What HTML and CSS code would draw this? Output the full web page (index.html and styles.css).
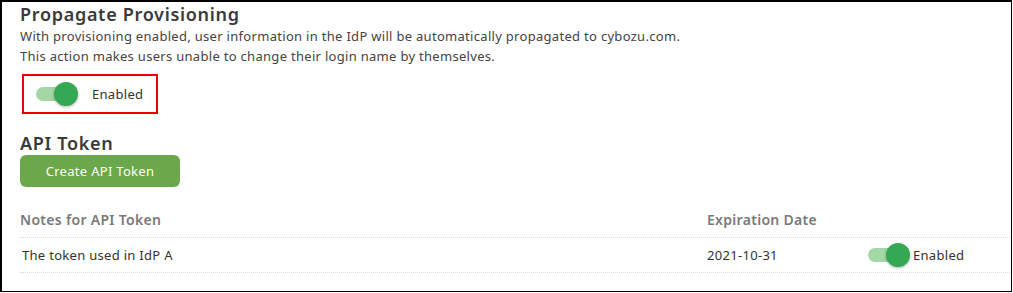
FILE: index.html
```html
<!DOCTYPE html>
<html>
<head>
<meta charset="utf-8">
<link rel="stylesheet" href="styles.css">
</head>
<body>
<div class="frame">
  <section class="section">
    <h2 class="title">Propagate Provisioning</h2>
    <p class="desc">With provisioning enabled, user information in the IdP will be automatically propagated to cybozu.com.<br>This action makes users unable to change their login name by themselves.</p>
    <div class="highlight">
      <span class="toggle"><span class="knob"></span></span>
      <span class="toggle-label">Enabled</span>
    </div>
  </section>
  <section class="section api">
    <h2 class="title">API Token</h2>
    <button class="btn">Create API Token</button>
    <div class="table">
      <div class="row head">
        <div class="c1">Notes for API Token</div>
        <div class="c2">Expiration Date</div>
        <div class="c3"></div>
      </div>
      <div class="row body">
        <div class="c1 note">The token used in IdP A</div>
        <div class="c2">2021-10-31</div>
        <div class="c3"><span class="toggle small"><span class="knob"></span></span><span class="toggle-label tight">Enabled</span></div>
      </div>
    </div>
  </section>
</div>
</body>
</html>
```

FILE: styles.css
```css
* { box-sizing: border-box; }
html, body { margin: 0; padding: 0; background: #fff; }
body { font-family: "Noto Sans", "Liberation Sans", sans-serif; color: #333; }
.frame {
  width: 1012px;
  height: 292px;
  border: 2px solid #000;
  border-right-width: 1px;
  border-bottom-width: 1px;
  padding: 0 0 0 18px;
  overflow: hidden;
}
.title {
  margin: 0;
  font-size: 18px;
  font-weight: 600;
  color: #3a3a3a;
  line-height: 24px;
  letter-spacing: 0.7px;
}
.desc {
  margin: 0;
  font-size: 13px;
  line-height: 20px;
  color: #444;
  letter-spacing: 0.3px;
}
.highlight {
  margin-top: 8px;
  margin-left: 2px;
  width: 136px;
  height: 40px;
  border: 2px solid #e00;
  display: flex;
  align-items: center;
  padding-left: 12px;
}
.toggle {
  position: relative;
  width: 40px;
  height: 14px;
  border-radius: 7px;
  background: #a3d7a5;
  display: inline-block;
  flex: none;
}
.knob {
  position: absolute;
  right: -2px;
  top: -5px;
  width: 24px;
  height: 24px;
  border-radius: 50%;
  background: #34a853;
  box-shadow: 0 1px 3px rgba(0,0,0,0.3);
}
.toggle-label {
  margin-left: 16px;
  font-size: 13px;
  color: #333;
  letter-spacing: 0.3px;
}
.toggle-label.tight { margin-left: 5px; }
.api { margin-top: 17px; }
.btn {
  display: block;
  width: 160px;
  height: 32px;
  border: none;
  border-radius: 6px;
  background: #6aa84b;
  color: #fff;
  font-family: inherit;
  font-size: 13px;
  letter-spacing: 0.3px;
}
.table { margin-top: 14px; width: 1000px; }
.row { display: flex; align-items: center; border-bottom: 1px dotted #d8d8d8; }
.row.head { height: 37px; font-size: 14px; font-weight: 600; color: #7a7a7a; letter-spacing: 0.3px; }
.row.body { height: 35px; font-size: 13px; color: #333; letter-spacing: 0.3px; }
.c1 { width: 687px; }
.note { padding-left: 2px; }
.c2 { width: 161px; }
.c3 { display: flex; align-items: center; }
```
